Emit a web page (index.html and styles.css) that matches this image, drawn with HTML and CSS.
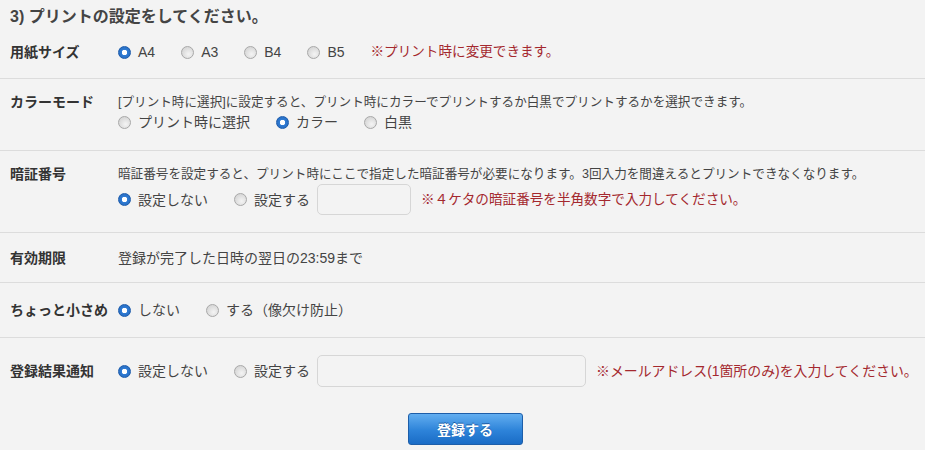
FILE: index.html
```html
<!DOCTYPE html>
<html lang="ja">
<head>
  <meta charset="UTF-8">
  <title>プリントの設定</title>
  <link rel="stylesheet" href="styles.css">
</head>
<body>

  <h3 class="title">3) プリントの設定をしてください。</h3>

  <form class="settings">
    <div class="row row-first">
      <div class="label">用紙サイズ</div>
      <div class="value">
        <div class="line">
          <label class="opt"><input type="radio" name="paper" checked> A4</label>
          <label class="opt"><input type="radio" name="paper"> A3</label>
          <label class="opt"><input type="radio" name="paper"> B4</label>
          <label class="opt"><input type="radio" name="paper"> B5</label>
          <span class="note">※プリント時に変更できます。</span>
        </div>
      </div>
    </div>

    <div class="row row-tall">
      <div class="label">カラーモード</div>
      <div class="value">
        <div class="line desc">[プリント時に選択]に設定すると、プリント時にカラーでプリントするか白黒でプリントするかを選択できます。</div>
        <div class="line">
          <label class="opt"><input type="radio" name="color"> プリント時に選択</label>
          <label class="opt"><input type="radio" name="color" checked> カラー</label>
          <label class="opt"><input type="radio" name="color"> 白黒</label>
        </div>
      </div>
    </div>

    <div class="row row-tall row-pin">
      <div class="label">暗証番号</div>
      <div class="value">
        <div class="line desc">暗証番号を設定すると、プリント時にここで指定した暗証番号が必要になります。3回入力を間違えるとプリントできなくなります。</div>
        <div class="line">
          <label class="opt"><input type="radio" name="pin" checked> 設定しない</label>
          <label class="opt opt-field"><input type="radio" name="pin"> 設定する</label>
          <input type="text" class="field field-pin">
          <span class="note">※４ケタの暗証番号を半角数字で入力してください。</span>
        </div>
      </div>
    </div>

    <div class="row row-plain">
      <div class="label">有効期限</div>
      <div class="value">
        <div class="line">登録が完了した日時の翌日の23:59まで</div>
      </div>
    </div>

    <div class="row row-small">
      <div class="label">ちょっと小さめ</div>
      <div class="value">
        <div class="line">
          <label class="opt"><input type="radio" name="small" checked> しない</label>
          <label class="opt"><input type="radio" name="small"> する（像欠け防止）</label>
        </div>
      </div>
    </div>

    <div class="row row-last">
      <div class="label label-field">登録結果通知</div>
      <div class="value">
        <div class="line">
          <label class="opt"><input type="radio" name="notify" checked> 設定しない</label>
          <label class="opt opt-field"><input type="radio" name="notify"> 設定する</label>
          <input type="text" class="field field-mail">
          <span class="note note-wide">※メールアドレス(1箇所のみ)を入力してください。</span>
        </div>
      </div>
    </div>

    <div class="actions">
      <button type="button" class="btn">登録する</button>
    </div>
  </form>

</body>
</html>
```

FILE: styles.css
```css
body {
  margin: 0;
  background: #f3f3f3;
  color: #444;
  font-family: "Liberation Sans", "Noto Sans CJK JP", sans-serif;
  font-size: 14px;
}
.title {
  margin: 0;
  padding: 7px 10px 0;
  font-size: 16px;
  line-height: 20px;
  color: #444;
}
.row {
  display: flex;
  align-items: flex-start;
  padding: 15px 0 15px 10px;
  border-bottom: 1px solid #dcdcdc;
}
.row-first {
  padding-bottom: 16px;
}
.row-tall {
  padding-top: 13px;
  padding-bottom: 18px;
}
.row-pin {
  padding-bottom: 17px;
}
.row-plain {
  padding-bottom: 14px;
}
.row-small {
  padding-top: 17px;
  padding-bottom: 17px;
}
.row-last {
  padding-top: 17px;
  padding-bottom: 14px;
  border-bottom: none;
}
.label {
  width: 108px;
  flex: none;
  font-weight: bold;
  color: #333;
  line-height: 20px;
  white-space: nowrap;
}
.label-field {
  line-height: 32px;
}
.value {
  flex: 1;
}
.line {
  display: flex;
  align-items: center;
  min-height: 20px;
  line-height: 20px;
  white-space: nowrap;
}
.desc {
  font-size: 12.6px;
}
.opt {
  display: inline-flex;
  align-items: center;
  margin-right: 26px;
  color: #444;
}
.opt-field {
  margin-right: 7px;
}
.opt input {
  appearance: none;
  -webkit-appearance: none;
  width: 13px;
  height: 13px;
  margin: 0 7px 0 0;
  border-radius: 50%;
  border: 1px solid #a8a8a8;
  background: radial-gradient(circle at 60% 65%, #f4f4f4 0, #dcdcdc 60%, #cfcfcf 100%);
  box-sizing: border-box;
}
.opt input:checked {
  border: 1px solid #1c5bab;
  background: radial-gradient(circle, #fff 0, #fff 2.5px, #2e7ad3 3px, #2a72c8 5px);
}
.note {
  color: #a4282e;
  font-size: 13.6px;
}
.note-wide {
  font-size: 13.9px;
}
.field {
  height: 31px;
  box-sizing: border-box;
  margin-right: 10px;
  border: 1px solid #d6d6d6;
  border-radius: 5px;
  background: #f3f3f3;
}
.field-pin {
  width: 94px;
}
.field-mail {
  width: 269px;
  height: 32px;
}
.actions {
  display: flex;
  justify-content: center;
  padding: 12px 0 0 5px;
}
.btn {
  width: 115px;
  height: 32px;
  border: 1px solid #1d5ea9;
  border-radius: 3px;
  background: linear-gradient(#62aef0, #2d83d9 55%, #1a6cc6);
  color: #fff;
  font-family: "Liberation Sans", "Noto Sans CJK JP", sans-serif;
  font-size: 14px;
  font-weight: bold;
  text-shadow: 0 -1px 0 #1b5ba5;
}
```
